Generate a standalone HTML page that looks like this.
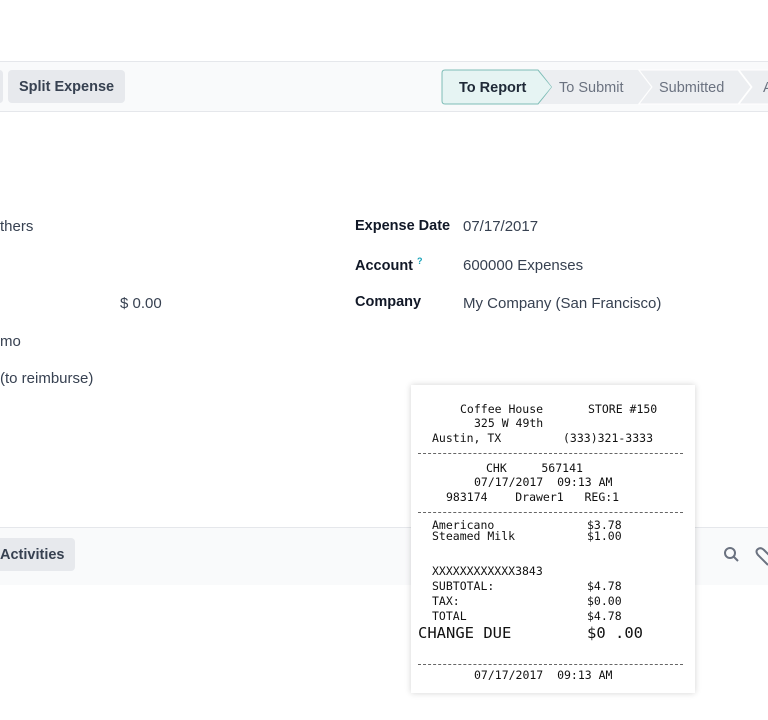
<!DOCTYPE html>
<html><head><meta charset="utf-8">
<style>
*{margin:0;padding:0;box-sizing:border-box}
body{width:768px;height:720px;overflow:hidden;background:#fff;font-family:"Liberation Sans",sans-serif;color:#374151;position:relative}
.cp{position:absolute;left:0;top:61px;width:768px;height:51px;background:#f9fafb;border-top:1px solid #e5e7eb;border-bottom:1px solid #e5e7eb}
.btn{position:absolute;background:#e7e9ed;border-radius:4px;font-size:14.5px;font-weight:bold;color:#374151;display:flex;align-items:center;padding:0 11px}
.t{position:absolute;font-size:15px;white-space:nowrap}
.lb{font-weight:bold;color:#111827;font-size:14.5px}
.chat{position:absolute;left:0;top:527px;width:768px;height:58px;background:#f9fafb;border-top:1px solid #e5e7eb}
.rc{position:absolute;left:411px;top:385px;width:284px;height:308px;background:#fff;box-shadow:0 0 6px rgba(0,0,0,.18);font-family:"DejaVu Sans Mono",monospace;font-size:11.5px;color:#111;line-height:14.5px}
.rc div{position:absolute;white-space:pre}
.d{left:7px;width:265px;height:0;border-top:1px dashed #666}
</style></head><body>
<div class="cp">
  <div class="btn" style="left:-4px;top:8px;width:7px;height:33px;padding:0"></div>
  <div class="btn" style="left:8px;top:8px;height:33px">Split Expense</div>
  <svg style="position:absolute;left:441px;top:7px" width="330" height="36">
    <path d="M1 4 Q1 1 4 1 H97 L111 18 L97 35 H4 Q1 35 1 32 Z" fill="#e6f4f3" stroke="#7fbdb7"/>
    <path d="M98 1 H197 L210 18 L197 35 H98 L111 18 Z" fill="#eceef1"/>
    <path d="M198 1 H297 L310 18 L297 35 H198 L211 18 Z" fill="#eceef1" stroke="#fff"/>
    <path d="M298 1 H330 V35 H298 L311 18 Z" fill="#eceef1" stroke="#fff"/>
    <text x="18" y="23" font-family="Liberation Sans" font-size="14.5" font-weight="bold" fill="#1f2937">To Report</text>
    <text x="118" y="23" font-family="Liberation Sans" font-size="14.5" fill="#6b7280">To Submit</text>
    <text x="218" y="23" font-family="Liberation Sans" font-size="14.5" fill="#6b7280">Submitted</text>
    <text x="322" y="23" font-family="Liberation Sans" font-size="14.5" fill="#6b7280">A</text>
  </svg>
</div>
<div class="t" style="left:0;top:218px">thers</div>
<div class="t" style="left:120px;top:295px">$ 0.00</div>
<div class="t" style="left:0;top:333px">mo</div>
<div class="t" style="left:0;top:370px">(to reimburse)</div>
<div class="t lb" style="left:355px;top:218px">Expense Date</div>
<div class="t" style="left:463px;top:218px">07/17/2017</div>
<div class="t lb" style="left:355px;top:256px">Account <sup style="color:#17a2b8;font-size:9px">?</sup></div>
<div class="t" style="left:463px;top:257px">600000 Expenses</div>
<div class="t lb" style="left:355px;top:294px">Company</div>
<div class="t" style="left:463px;top:295px">My Company (San Francisco)</div>
<div class="chat">
  <div class="btn" style="left:-4px;top:10px;height:33px;padding-left:4px">Activities</div>
  <svg style="position:absolute;left:723px;top:18px" width="50" height="22" fill="none" stroke="#6b7280" stroke-width="2">
    <circle cx="7" cy="7" r="5"/><path d="M11 11 L15 15"/>
    <path d="M45 19 L35 9 Q32 5 35 3 Q38 1 41 4 L50 13" />
  </svg>
</div>
<div class="rc">
<div style="left:49px;top:17px">Coffee House</div><div style="left:177px;top:17px">STORE #150</div>
<div style="left:63px;top:31px">325 W 49th</div>
<div style="left:21px;top:46px">Austin, TX</div><div style="left:152px;top:46px">(333)321-3333</div>
<div class="d" style="top:68px"></div>
<div style="left:75px;top:76px">CHK     567141</div>
<div style="left:63px;top:90px">07/17/2017  09:13 AM</div>
<div style="left:35px;top:105px">983174    Drawer1   REG:1</div>
<div class="d" style="top:127px"></div>
<div style="left:21px;top:135px;line-height:11px">Americano
Steamed Milk</div>
<div style="left:176px;top:135px;line-height:11px">$3.78
$1.00</div>
<div style="left:21px;top:179px">XXXXXXXXXXXX3843</div>
<div style="left:21px;top:194px">SUBTOTAL:</div><div style="left:176px;top:194px">$4.78</div>
<div style="left:21px;top:209px">TAX:</div><div style="left:176px;top:209px">$0.00</div>
<div style="left:21px;top:224px">TOTAL</div><div style="left:176px;top:224px">$4.78</div>
<div style="left:7px;top:239px;font-size:15.5px;line-height:18px">CHANGE DUE</div>
<div style="left:176px;top:239px;font-size:15.5px;line-height:18px">$0 .00</div>
<div class="d" style="top:279px"></div>
<div style="left:63px;top:283px">07/17/2017  09:13 AM</div>
</div>
</body></html>
